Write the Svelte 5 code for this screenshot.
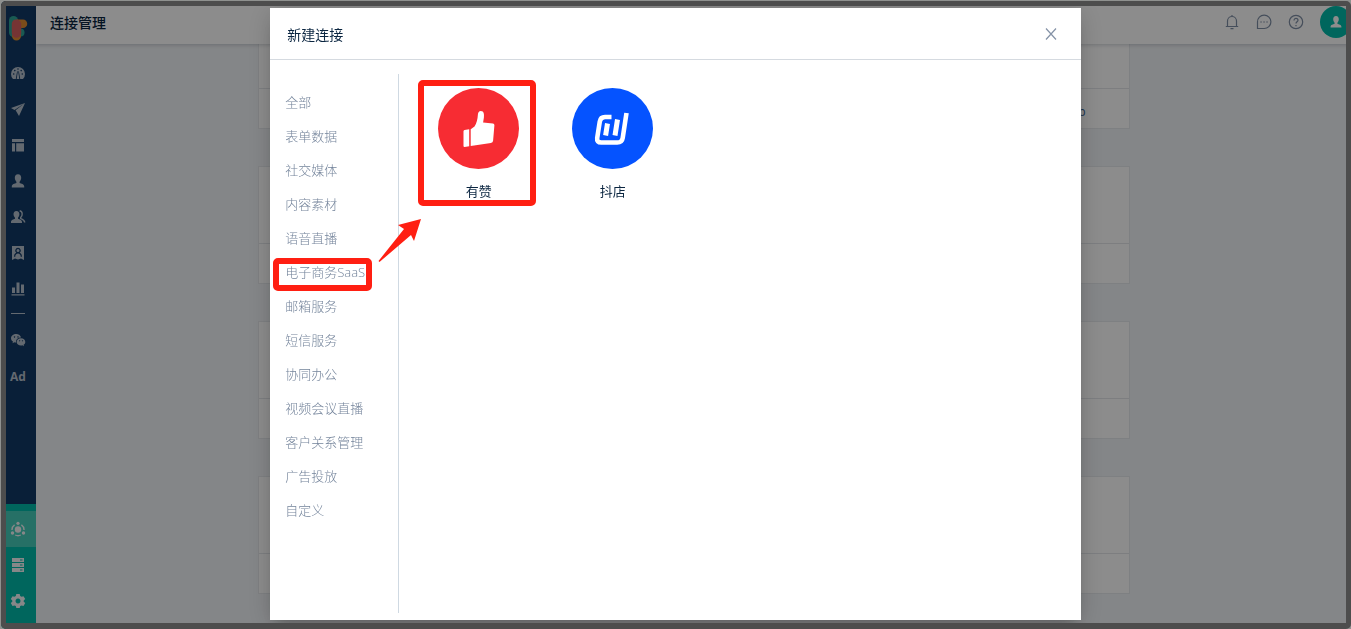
<script>
  const mainNav = [
    { id: 'dashboard', label: '仪表盘' },
    { id: 'send', label: '营销' },
    { id: 'layout', label: '页面' },
    { id: 'user', label: '客户' },
    { id: 'users', label: '群组' },
    { id: 'badge', label: '会员' },
    { id: 'chart', label: '分析' }
  ];

  const bottomNav = [
    { id: 'hub', label: '连接' },
    { id: 'server', label: '数据' },
    { id: 'gear', label: '设置' }
  ];

  const categories = [
    '全部', '表单数据', '社交媒体', '内容素材', '语音直播', '电子商务SaaS', '邮箱服务',
    '短信服务', '协同办公', '视频会议直播', '客户关系管理', '广告投放', '自定义'
  ];
  const marked = '电子商务SaaS';

  let selected = $state(marked);
  const cards = ['p', '', '', ''];
</script>

{#snippet icon(id)}
  <svg class="icon" viewBox="0 0 16 16" aria-hidden="true">
    {#if id === 'dashboard'}
      <path fill-rule="evenodd" d="M3 14 Q1 12 1 9 A7 7 0 0 1 15 9 Q15 12 13 14 H10.200 L8.900 6.500 H7.100 L5.800 14Z M2.900 9 a.8.8 0 1 0 1.600 0 a.8.8 0 1 0-1.600 0 M4 5.600 a.8.8 0 1 0 1.600 0 a.8.8 0 1 0-1.600 0 M7.200 4 a.8.8 0 1 0 1.600 0 a.8.8 0 1 0-1.600 0 M10.400 5.600 a.8.8 0 1 0 1.600 0 a.8.8 0 1 0-1.600 0 M11.500 9 a.8.8 0 1 0 1.600 0 a.8.8 0 1 0-1.600 0" />
      <path d="M7.700 7h.6l1 7H6.700z" />
    {:else if id === 'send'}
      <path d="M1 7 15 2 4.500 9Z M5.600 9.300 15 2 9 15Z" />
    {:else if id === 'layout'}
      <path d="M2 2h12v3H2z M2 6.200h3v8.300H2z M6.200 6.200H14v8.300H6.200z" />
    {:else if id === 'user'}
      <path d="M8 1.200c2.200 0 3.200 1.600 3.200 3.600S10 8.400 9.600 8.800v1.100c1.600.6 4.600 1 4.600 3.600v.9H1.800v-.9c0-2.600 3-3 4.600-3.600V8.800C6 8.400 4.800 6.800 4.800 4.800S5.800 1.200 8 1.200z" />
    {:else if id === 'users'}
      <path d="M6.400 2c2 0 3 1.400 3 3.300S8.300 8.500 8 8.800v1c1.400.6 4 1 4 3.300v.9H1v-.9c0-2.300 2.600-2.700 4-3.300v-1c-.3-.3-1.500-1.600-1.500-3.500S4.400 2 6.400 2z" />
      <path class="line" d="M9.700 1.800c3.300.8 3 5 1 6.700v1c1.800.7 4 1.400 4 4" />
    {:else if id === 'badge'}
      <path fill-rule="evenodd" d="M2 1h12v14l-3-1.500-3 1-3-1L2 15z M8 2.800a2.800 2.800 0 0 0-1.700 5C4.900 8.400 4 9.800 4 11.700h1.300C5.300 9.700 6.400 8.500 8 8.500s2.700 1.200 2.700 3.200H12c0-1.900-.9-3.300-2.300-3.900A2.800 2.800 0 0 0 8 2.800z M8 4.100a1.500 1.500 0 1 1 0 3 1.500 1.500 0 0 1 0-3z" />
    {:else if id === 'chart'}
      <path d="M2 6.500h3V12H2z M6.500 1.500h3V12h-3z M11 3.500h3V12h-3z M1.500 13.200h13v1.300h-13z" />
    {:else if id === 'wechat'}
      <path fill-rule="evenodd" d="M6.200 2C3.300 2 1 3.900 1 6.300c0 1.400.8 2.500 2 3.300l-.5 1.600 1.900-1c.5.200 1.100.3 1.800.3-.6-3 2-4.900 4.900-4.900C10.700 3.500 8.700 2 6.200 2z M4.500 4.300a.7.700 0 1 0 .01 0z M8 4.300a.7.700 0 1 0 .01 0z" />
      <path fill-rule="evenodd" d="M11 6.300c-2.500 0-4.300 1.600-4.300 3.600s1.900 3.600 4.300 3.600c.5 0 1-.1 1.400-.2l1.600.9-.4-1.400c1-.7 1.700-1.700 1.700-2.900 0-2-1.900-3.600-4.300-3.600z M9.600 8.200a.6.600 0 1 0 .01 0z M12.500 8.200a.6.600 0 1 0 .01 0z" />
    {:else if id === 'hub'}
      <circle cx="8" cy="8.500" r="3.200" />
      <path class="line" d="M4.600 3.800A6 6 0 0 0 2 9 M11.400 3.800A6 6 0 0 1 14 9 M5.200 14a6 6 0 0 0 5.600 0" />
      <circle cx="8" cy="2.300" r="1.600" />
      <circle cx="2.500" cy="12" r="1.700" />
      <circle cx="13.500" cy="12" r="1.700" />
    {:else if id === 'server'}
      <path fill-rule="evenodd" d="M2 1h12v4H2z M10 2.400v1.200h2.500V2.400z M2 6h12v4H2z M10 7.400v1.200h2.500V7.400z M2 11h12v4H2z M10 12.400v1.200h2.500v-1.200z" />
    {:else if id === 'gear'}
      <path fill-rule="evenodd" d="M6.300 1h3.400l.5 2 1.300.8 2-.6 1.700 2.900L13.700 7.500v1.200l1.500 1.400-1.700 2.800-2-.5-1.300.7-.5 2H6.300l-.5-2-1.300-.7-2 .5L.8 10.100l1.500-1.400V7.500L.8 6.100l1.700-2.900 2 .6L5.800 3z M8 5.600a2.500 2.500 0 1 0 .01 0z" />
    {/if}
  </svg>
{/snippet}

<div class="app">
  <nav class="sidebar">
    <a class="logo" href="#home" aria-label="首页">
      <svg viewBox="0 0 20 26" aria-hidden="true">
        <rect x="1" y="0" width="9" height="21" rx="4.500" fill="#2fa496" />
        <circle cx="12.500" cy="16.500" r="4" fill="#2fa496" />
        <path d="M9 3.500h6a4 4 0 0 1 0 8.500h-2v8a4.500 4.500 0 0 1-9 0z" fill="#e08a30" />
        <path d="M8 3.500c3 0 5.200 2 5.200 5v8c0 7-9.400 7-9.400 0V8c0-2.500 1.700-4.500 4.200-4.500z" fill="#d8605f" />
      </svg>
    </a>
    {#each mainNav as item}
      <a class="nav-item" href="#{item.id}" aria-label={item.label}>{@render icon(item.id)}</a>
    {/each}
    <div class="nav-split"></div>
    <a class="nav-item" href="#wechat" aria-label="微信">{@render icon('wechat')}</a>
    <a class="nav-item ad" href="#ad">Ad</a>

    <div class="nav-bottom">
      {#each bottomNav as item, i}
        <a class="nav-item" class:active={i === 0} href="#{item.id}" aria-label={item.label}>{@render icon(item.id)}</a>
      {/each}
    </div>
  </nav>

  <div class="page">
    <header class="topbar">
      <h1>连接管理</h1>
      <div class="tools">
        <button type="button" aria-label="通知">
          <svg viewBox="0 0 16 16"><path d="M1.800 12.500h12.400 M3.500 12.500V7a4.500 4.500 0 0 1 9 0v5.500 M8 2.500V1 M6.500 14.700h3" /></svg>
        </button>
        <button type="button" aria-label="消息">
          <svg viewBox="0 0 16 16"><path d="M1.500 14.500V8A6.700 6.700 0 1 1 8 14.500z M4.300 8h1.500 M7.300 8h1.500 M10.300 8h1.500" /></svg>
        </button>
        <button type="button" aria-label="帮助">
          <svg viewBox="0 0 16 16"><circle cx="8" cy="8" r="6.700" /><path d="M6 6.500C6 3.500 10 3.800 10 6.300 10 7.800 8 7.800 8 9.500 M8 11v1.200" /></svg>
        </button>
        <button type="button" class="avatar" aria-label="账户">{@render icon('user')}</button>
      </div>
    </header>

    <main>
      <div class="cards">
        {#each cards as link}
          <section class="card">
            <div class="card-body"></div>
            <div class="card-foot">{#if link}<a href="#link">{link}</a>{/if}</div>
          </section>
        {/each}
      </div>
    </main>
  </div>
</div>

<div class="overlay">
  <div class="dialog" role="dialog" aria-modal="true" aria-labelledby="dialog-title">
    <div class="dialog-head">
      <h2 id="dialog-title">新建连接</h2>
      <button type="button" class="close" aria-label="关闭">
        <svg viewBox="0 0 12 12"><path d="M1 .5 11 11.500 M11 .5 1 11.500" /></svg>
      </button>
    </div>

    <div class="dialog-body">
      <ul class="categories">
        {#each categories as name}
          <li>
            <button type="button" aria-pressed={selected === name} onclick={() => (selected = name)}>{name}</button>
            {#if name === marked}
              <span class="mark mark-category"></span>
              <svg class="arrow" viewBox="0 0 44 44" aria-hidden="true">
                <path d="M.5 42 26 10 20 6 43 0 36 22 33 16 1.500 43z" />
              </svg>
            {/if}
          </li>
        {/each}
      </ul>

      <div class="apps">
        <button type="button" class="app-item">
          <svg class="app-logo" viewBox="0 0 81 81" aria-hidden="true">
            <circle cx="40.500" cy="40.500" r="40.500" fill="#f72c33" />
            <path fill="#fff" d="M25.500 43.200q0-1 1-1.200l4.700-.7v17L26.500 59q-1 0-1-1z M32.700 41.200 36.500 38.500Q39.500 34 39.900 26.500 40.200 23 42.700 23c3.500 0 3.500 3.500 3.200 6.500l-.8 5 9.800 1q1.500.2 1.500 1.700l-1.300 15.500q-.2 2-2.200 2.300l-20.200 2.900z" />
          </svg>
          <span>有赞</span>
          <span class="mark mark-app"></span>
        </button>
        <button type="button" class="app-item">
          <svg class="app-logo" viewBox="0 0 81 81" aria-hidden="true">
            <circle cx="40.500" cy="40.500" r="40.500" fill="#0553ff" />
            <g fill="none" stroke="#fff">
              <path stroke-width="4.600" d="M39.500 29H33q-4.500 0-5.200 4.500L25.200 50q-.6 4.500 4 4.500h16q4.800 0 5.500-4.500L54.500 25" />
              <path stroke-width="5" d="M35.500 35.500 33.600 47.500 M45.500 31.500 43 47.500" />
            </g>
          </svg>
          <span>抖店</span>
        </button>
      </div>
    </div>
  </div>
</div>

<div class="frame"></div>

<style>
  :global(body) {
    margin: 0;
    background: #8f918f;
    font-family: "Open Sans", "Noto Sans CJK SC", sans-serif;
  }

  button {
    padding: 0;
    border: 0;
    background: none;
    font: inherit;
    color: inherit;
    cursor: pointer;
  }

  .app {
    display: flex;
    height: 100vh;
    background: #f1f4f7;
    overflow: hidden;
  }

  /* Sidebar */
  .sidebar {
    display: flex;
    flex-direction: column;
    flex: none;
    width: 36px;
    background: #123a66;
    color: #b4bfcc;
  }

  .logo {
    height: 39px;
    padding: 16px 0 0 8px;
    box-sizing: content-box;
  }

  .logo svg { display: block; width: 20px; height: 26px; }

  .nav-item {
    display: flex;
    align-items: center;
    justify-content: center;
    height: 36px;
    color: inherit;
    text-decoration: none;
  }

  .icon { width: 16px; height: 16px; fill: currentColor; }
  .icon .line { fill: none; stroke: currentColor; stroke-width: 1.4; }

  .nav-split {
    height: 1px;
    margin: 6px 11px 8px;
    background: #b4bfcc;
  }

  .ad { font-size: 12px; font-weight: 700; }

  .nav-bottom {
    margin-top: auto;
    padding: 7px 0 10px;
    background: #00bba9;
    color: #f4f6f8;
  }

  .active { background: #45cdbb; }

  /* Page */
  .page {
    display: flex;
    flex: 1;
    flex-direction: column;
    min-width: 0;
  }

  .topbar {
    display: flex;
    align-items: center;
    justify-content: space-between;
    flex: none;
    height: 44px;
    padding-left: 14px;
    background: #fff;
    box-shadow: 0 1px 4px rgba(0, 21, 41, 0.2);
    z-index: 1;
  }

  h1 {
    margin: 0;
    font-size: 14px;
    font-weight: 500;
    color: #0a2540;
  }

  .tools {
    display: flex;
    align-items: center;
    gap: 16px;
    color: #7f8fa6;
  }

  .tools button { display: flex; }

  .tools svg {
    width: 16px;
    height: 16px;
    fill: none;
    stroke: currentColor;
    stroke-width: 1.2;
  }

  .tools .avatar {
    align-items: center;
    justify-content: center;
    width: 32px;
    height: 32px;
    margin-right: -1px;
    border-radius: 50%;
    background: #00bba9;
    color: #fff;
  }

  .tools .avatar svg { width: 14px; height: 14px; fill: currentColor; stroke: none; }

  main { flex: 1; overflow: hidden; }

  .cards {
    display: flex;
    flex-direction: column;
    gap: 37px;
    max-width: 872px;
    margin: -33px auto 0;
  }

  .card {
    border: 1px solid #e6e9ed;
    background: #fff;
  }

  .card-body { height: 76px; border-bottom: 1px solid #e3e6ea; }

  .card-foot {
    height: 39px;
    padding-right: 43px;
    font-size: 12px;
    line-height: 46px;
    text-align: right;
  }

  .card-foot a { color: #2f5d8f; text-decoration: none; }

  /* Dialog */
  .overlay {
    position: fixed;
    inset: 0;
    z-index: 10;
    display: flex;
    justify-content: center;
    padding: 8px 0 9px;
    background: rgba(0, 0, 0, 0.45);
  }

  .dialog {
    display: flex;
    flex-direction: column;
    width: 60%;
    background: #fff;
    box-shadow: 0 11px 15px -7px rgba(0, 0, 0, 0.2), 0 4px 24px rgba(0, 0, 0, 0.18);
    color: #0a2540;
  }

  .dialog-head {
    display: flex;
    align-items: center;
    justify-content: space-between;
    height: 51px;
    padding: 0 24px 0 17px;
    border-bottom: 1px solid #d5dae0;
  }

  h2 { margin: 0; font-size: 14px; font-weight: 400; }

  .close svg {
    display: block;
    width: 12px;
    height: 12px;
    fill: none;
    stroke: #8492a6;
    stroke-width: 1.2;
  }

  .dialog-body {
    display: flex;
    flex: 1;
    padding: 14px 0 7px;
  }

  .categories {
    flex: none;
    width: 113px;
    margin: 0;
    padding: 11px 0 0 15px;
    border-right: 1px solid #cfd9e2;
    list-style: none;
    font-size: 13px;
    font-weight: 300;
    line-height: 34px;
    color: #74849b;
  }

  .categories li { position: relative; height: 34px; }

  .apps {
    display: flex;
    flex: 1;
    align-items: flex-start;
    gap: 53px;
    padding: 14px 39px;
  }

  .app-item {
    position: relative;
    display: flex;
    flex-direction: column;
    align-items: center;
    gap: 12px;
    font-size: 13px;
    line-height: 20px;
  }

  .app-logo { width: 81px; height: 81px; }

  .mark {
    position: absolute;
    border: 6px solid #ff1f12;
    border-radius: 5px;
    box-sizing: border-box;
    pointer-events: none;
  }

  .mark-category { top: 3px; left: -12px; width: 99px; height: 33px; }
  .mark-app { top: -8px; left: -20px; width: 118px; height: 126px; }

  .arrow {
    position: absolute;
    top: -36px;
    left: 93px;
    width: 44px;
    height: 44px;
    fill: #ff1f12;
    pointer-events: none;
  }

  .frame {
    position: fixed;
    inset: 1px 0 0 1px;
    z-index: 20;
    border: 5px solid #4d4d4d;
    border-bottom-width: 6px;
    border-radius: 5px;
    box-shadow: 0 0 0 6px #8f918f;
    pointer-events: none;
  }
</style>
